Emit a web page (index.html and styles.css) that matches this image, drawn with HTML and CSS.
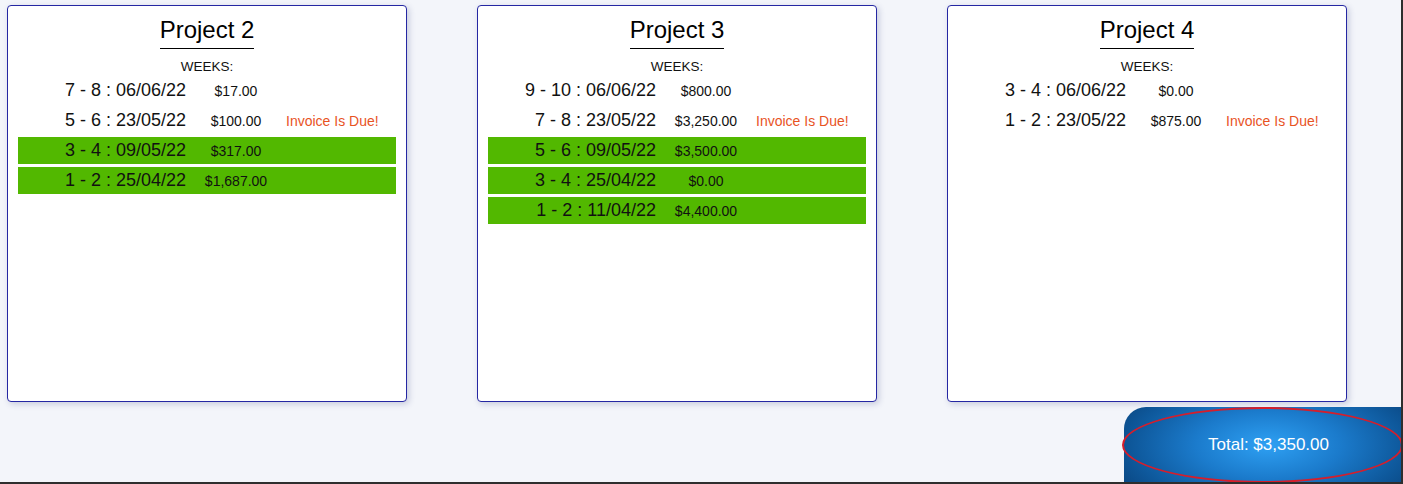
FILE: index.html
```html
<!DOCTYPE html>
<html>
<head>
<meta charset="utf-8">
<link rel="stylesheet" href="styles.css">
</head>
<body>
<div class="frame">
  <div class="cards">
    <div class="card">
      <div class="title-wrap"><h2 class="title">Project 2</h2></div>
      <div class="weeks">WEEKS:</div>
      <div class="row"><span class="date">7 - 8 : 06/06/22</span><span class="amt">$17.00</span><span class="due"></span></div>
      <div class="row"><span class="date">5 - 6 : 23/05/22</span><span class="amt">$100.00</span><span class="due">Invoice Is Due!</span></div>
      <div class="row paid"><span class="date">3 - 4 : 09/05/22</span><span class="amt">$317.00</span><span class="due"></span></div>
      <div class="row paid"><span class="date">1 - 2 : 25/04/22</span><span class="amt">$1,687.00</span><span class="due"></span></div>
    </div>
    <div class="card">
      <div class="title-wrap"><h2 class="title">Project 3</h2></div>
      <div class="weeks">WEEKS:</div>
      <div class="row"><span class="date">9 - 10 : 06/06/22</span><span class="amt">$800.00</span><span class="due"></span></div>
      <div class="row"><span class="date">7 - 8 : 23/05/22</span><span class="amt">$3,250.00</span><span class="due">Invoice Is Due!</span></div>
      <div class="row paid"><span class="date">5 - 6 : 09/05/22</span><span class="amt">$3,500.00</span><span class="due"></span></div>
      <div class="row paid"><span class="date">3 - 4 : 25/04/22</span><span class="amt">$0.00</span><span class="due"></span></div>
      <div class="row paid"><span class="date">1 - 2 : 11/04/22</span><span class="amt">$4,400.00</span><span class="due"></span></div>
    </div>
    <div class="card">
      <div class="title-wrap"><h2 class="title">Project 4</h2></div>
      <div class="weeks">WEEKS:</div>
      <div class="row"><span class="date">3 - 4 : 06/06/22</span><span class="amt">$0.00</span><span class="due"></span></div>
      <div class="row"><span class="date">1 - 2 : 23/05/22</span><span class="amt">$875.00</span><span class="due">Invoice Is Due!</span></div>
    </div>
  </div>
  <div class="total-bar">
    <div class="total">
      <span class="total-text">Total: $3,350.00</span>
      <div class="ring"></div>
    </div>
  </div>
</div>
</body>
</html>
```

FILE: styles.css
```css
* { box-sizing: border-box; }
html, body { margin: 0; padding: 0; }
body {
  background: #f3f5fa;
  font-family: "Liberation Sans", Arial, sans-serif;
  color: #111;
  overflow: hidden;
}
.frame {
  width: 1403px;
  height: 484px;
  border-right: 2px solid #2e2e2e;
  border-bottom: 2px solid #2e2e2e;
  display: flex;
  flex-direction: column;
  overflow: hidden;
}
.cards {
  display: flex;
  gap: 70px;
  padding: 5px 0 0 7px;
}
.card {
  width: 400px;
  height: 397px;
  background: #fff;
  border: 1px solid #2527a3;
  border-radius: 4px;
  box-shadow: 2px 2px 6px rgba(40, 50, 120, 0.22);
  padding: 10px 10px 0 10px;
}
.title-wrap {
  text-align: center;
}
.title {
  display: inline-block;
  margin: 0;
  font-size: 24px;
  line-height: 28px;
  font-weight: normal;
  color: #000;
  padding-bottom: 4px;
  border-bottom: 1px solid #000;
}
.weeks {
  text-align: center;
  font-size: 13.5px;
  line-height: 16px;
  margin-top: 10px;
  color: #111;
}
.row {
  display: grid;
  grid-template-columns: 168px 100px 1fr;
  align-items: center;
  height: 27px;
  margin-top: 3px;
}
.weeks + .row { margin-top: 2px; }
.row.paid { background: #52b800; }
.date {
  text-align: right;
  font-size: 18px;
}
.amt {
  text-align: center;
  font-size: 14px;
}
.due {
  font-size: 14px;
  color: #e8531f;
}
.total-bar {
  display: flex;
  justify-content: flex-end;
  margin-top: 5px;
}
.total {
  position: relative;
  width: 277px;
  height: 76px;
  border-top-left-radius: 22px;
  background: radial-gradient(ellipse 160px 75px at 144px 38px, #2ea0f3 0%, #1b7bcc 45%, #0e589b 85%, #0b4b88 100%);
  display: flex;
  align-items: center;
  justify-content: center;
  padding-left: 12px;
}
.total-text {
  color: #fff;
  font-size: 17px;
}
.ring {
  position: absolute;
  left: -2px;
  top: 0;
  width: 281px;
  height: 76px;
  border: 2px solid #d61e2b;
  border-radius: 50%;
}
```
